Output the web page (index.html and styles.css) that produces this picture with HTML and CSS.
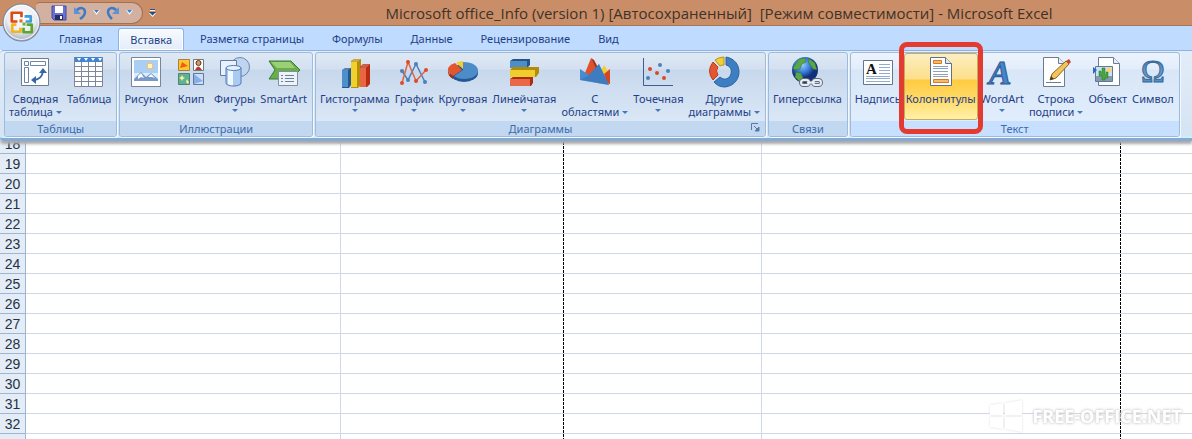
FILE: index.html
```html
<!DOCTYPE html>
<html lang="ru">
<head>
<meta charset="utf-8">
<title>Microsoft Excel</title>
<link rel="stylesheet" href="styles.css">
</head>
<body>
<div class="app">
<header class="titlebar">
  <button class="office" aria-label="Office">
    <svg viewBox="0 0 38 38"><defs><radialGradient id="orb" cx=".5" cy=".35" r=".65"><stop offset="0" stop-color="#fff"/><stop offset=".6" stop-color="#e9edf3"/><stop offset="1" stop-color="#9fabc0"/></radialGradient></defs><circle cx="19" cy="19" r="18" fill="url(#orb)" stroke="#7c8596"/><circle cx="19" cy="19" r="16.5" fill="none" stroke="#fff" opacity=".8"/>
    <g fill="none" stroke-width="2.600" stroke-linejoin="round"><path d="M15 18H9.500V9.500H19V14" stroke="#dc4a16"/><path d="M22 13h6v5h-5" stroke="#3d9be0"/><path d="M14 21h-4v7h8V24" stroke="#f3b51c"/><path d="M21 24v4.500h8V21h-5" stroke="#5fa52c"/></g><path d="M17 16h3v3h-3z" fill="#e96b20"/><path d="M20 19h3v3h-3z" fill="#6fb13a"/></svg>
  </button>
  <div class="quick">
    <button class="qbtn" aria-label="Сохранить"><svg width="16" height="16"><path d="M1 1h14v14H3l-2-2z" fill="#6a72d0" stroke="#4448a6"/><path d="M4 1h8v7H4z" fill="#fff"/><path d="M4 10h8v5H4z" fill="#252e66"/><path d="M9 11h2v3H9z" fill="#fff"/></svg></button>
    <button class="qbtn" aria-label="Отменить"><svg width="14" height="16"><path d="M3 6c4-5 9-3 9 1 0 3-2 5-5 7" fill="none" stroke="#3f78c4" stroke-width="2.500"/><path d="M1 2v7h7z" fill="#5b93d8"/></svg></button>
    <button class="qbtn" aria-label="Список отмены"><svg width="7" height="5"><path d="M0 0h7L3.500 5z" fill="#f3f7ff"/><path d="M1 0h5L3.500 3z" fill="#477bc0"/></svg></button>
    <button class="qbtn" aria-label="Вернуть"><svg width="14" height="16"><path d="M11 6C7 1 2 3 2 7c0 3 2 5 4 7" fill="none" stroke="#3f78c4" stroke-width="2.500"/><path d="M13 2v7H6z" fill="#5b93d8"/></svg></button>
    <button class="qbtn" aria-label="Список возврата"><svg width="7" height="5"><path d="M0 0h7L3.500 5z" fill="#f3f7ff"/><path d="M1 0h5L3.500 3z" fill="#477bc0"/></svg></button>
  </div>
  <button class="qbtn" aria-label="Настройка панели"><svg width="7" height="8"><path d="M1 .5h5" stroke="#304b78"/><path d="M1 1.500h5" stroke="#fff"/><path d="M0 4h7L3.500 8z" fill="#fff"/><path d="M0 3h7L3.500 6.500z" fill="#304b78"/></svg></button>
  <h1 class="title">Microsoft office_Info (version 1) [Автосохраненный]&nbsp; [Режим совместимости] - Microsoft Excel</h1>
</header>
<nav class="tabs">
  <button class="tab">Главная</button><button class="tab active">Вставка</button><button class="tab">Разметка страницы</button><button class="tab">Формулы</button><button class="tab">Данные</button><button class="tab">Рецензирование</button><button class="tab">Вид</button>
</nav>
<main class="ribbon">
  <section class="group">
    <div class="tools">
      <button class="tool"><svg viewBox="0 0 32 32"><path d="M2.500 2.500h27v27h-27z" fill="#fff" stroke="#707b8d"/><g fill="#fff" stroke="#6f84a4"><path d="M5.500 5.500h4v4h-4zM11.500 5.500h15v4h-15zM5.500 11.500h4v15h-4z"/></g><path d="M14 24q9 0 10-9" fill="none" stroke="#3565a5" stroke-width="2"/><path d="M20 17l4-5 4 5zM17 20l-5 4 5 4z" fill="#3565a5"/></svg><span>Сводная</span><span>таблица<i class="arrow"></i></span></button>
      <button class="tool"><svg viewBox="0 0 32 32"><path d="M2 2h28v29H2z" fill="#fff"/><path d="M2 1h28v5H2z" fill="#4284d2"/><path d="M4 2h4L6 5zM11 2h4l-2 3zM18 2h4l-2 3zM25 2h4l-2 3z" fill="#fff"/><path d="M1.500 1v29.500h28V1M8.500 6v24M15.500 6v24M22.500 6v24M2 10.500h28M2 15.500h28M2 20.500h28M2 25.500h28" stroke="#7c879c" fill="none"/></svg><span>Таблица</span></button>
    </div><h2>Таблицы</h2>
  </section>
  <section class="group">
    <div class="tools">
      <button class="tool"><svg viewBox="0 0 32 32"><path d="M1.500 1.500h29v29h-29z" fill="#fff" stroke="#7a8597"/><path d="M4 4h24v21H4z" fill="#a9d0f4"/><path d="M4 17h24v8H4z" fill="#dcecf9"/><circle cx="20" cy="10" r="3" fill="#fff4c2" stroke="#f7b85b"/><path d="M4 23l7-7 5 5 5-4 7 6v2H4z" fill="#779bc9"/><path d="M8 20l3-3 3 5-3-1-3 2zM18 21l3-3 4 4-3-1z" fill="#fff"/></svg><span>Рисунок</span></button>
      <button class="tool"><svg viewBox="0 0 32 32"><path d="M3.500 3.500h11v11h-11z" fill="#ffc72d" stroke="#a78134"/><path d="M5 12l2-6 6 4z" fill="#ef5c19"/><path d="M18.500 3.500h10v11h-10z" fill="#fff" stroke="#777"/><circle cx="23.500" cy="7" r="2.500" fill="#d99b62" stroke="#593525"/><path d="M20 14q3-7 7 0z" fill="#b83c25"/><path d="M3.500 17.500h11v11h-11z" fill="#5eb294" stroke="#57806e"/><path d="M7 19l1 2 2 1-2 1-1 2-1-2-2-1 2-1zM12 23l1 2 1 1-1 2-2-2z" fill="#fff09a"/><path d="M18.500 17.500h10v11h-10z" fill="#cbdffa" stroke="#61799c"/><path d="M19 18l9 7-9 3z" fill="#84afea"/></svg><span>Клип</span></button>
      <button class="tool"><svg viewBox="0 0 32 32"><circle cx="21" cy="11" r="9.500" fill="#bfd5ef" stroke="#6988b1"/><path d="M1.500 4.500h16v15h-16z" fill="#e9f2fc" stroke="#617da5"/><path d="M7 12v15c0 4 15 4 15 0V12z" fill="#a9cbf2" stroke="#557ab1"/><path d="M9 13v15q3 2 5 1V13z" fill="#eff7ff"/><ellipse cx="14.500" cy="12" rx="7.500" ry="2.500" fill="#e6f1ff" stroke="#557ab1"/></svg><span>Фигуры</span><i class="arrow"></i></button>
      <button class="tool"><svg viewBox="0 0 32 32"><path d="M1 5h22l9 9-9 9H1l6-9z" fill="#68ae4b" stroke="#397b34"/><path d="M3 6h19l5 6H9z" fill="#9dcf76"/><path d="M10.500 15.500h19v14h-19z" fill="#edf3f8" stroke="#8290a0"/><path d="M13 19.500h2M17 19.500h9M13 22.500h2M17 22.500h9M13 25.500h2M17 25.500h9" stroke="#6682a1"/></svg><span>SmartArt</span></button>
    </div><h2>Иллюстрации</h2>
  </section>
  <section class="group">
    <div class="tools">
      <button class="tool"><svg viewBox="0 0 32 32"><path d="M3 14l3-2h6v17l-2 3H3z" fill="#23588f"/><path d="M3 14h6v17H3z" fill="#4d8fcb"/><path d="M12 5l3-2h7v26l-3 3h-7z" fill="#b68e08"/><path d="M12 6h6v25h-6z" fill="#f0cf2e"/><path d="M21 11l3-3h7v20l-3 3h-7z" fill="#b92c13"/><path d="M21 12h6v19h-6z" fill="#e96643"/><path d="M3 14l3-2h6l-3 2zM12 6l3-3h7l-4 3zM21 12l3-4h7l-4 4z" fill="#fff" opacity=".25"/></svg><span>Гистограмма</span><i class="arrow"></i></button>
      <button class="tool"><svg viewBox="0 0 32 32"><g fill="#4b80b9"><path d="M4 15l6 9 8-16 9 18" fill="none" stroke="#4b80b9" stroke-width="1.500"/><circle cx="4" cy="15" r="2"/><circle cx="10" cy="24" r="2"/><circle cx="18" cy="8" r="2"/><circle cx="27" cy="26" r="2"/></g><g fill="#db4b29"><path d="M4 27l6-21 8 19 10-11" fill="none" stroke="#db6547" stroke-width="1.500"/><circle cx="4" cy="27" r="2"/><circle cx="10" cy="6" r="2"/><circle cx="18" cy="25" r="2"/><circle cx="28" cy="14" r="2"/></g></svg><span>График</span><i class="arrow"></i></button>
      <button class="tool"><svg viewBox="0 0 32 32"><ellipse cx="17" cy="17" rx="14" ry="9" fill="#245894"/><path d="M16 14V6c20 0 20 17 1 17q-6 0-10-3z" fill="#4d8cc8"/><path d="M15 14l-9 6q-11-8 2-13z" fill="#e4552c"/><path d="M1 13q0 5 5 7v3q-6-3-5-10z" fill="#a92b12"/><path d="M9 7q3-2 7-2v8z" fill="#f4ce2e"/></svg><span>Круговая</span><i class="arrow"></i></button>
      <button class="tool"><svg viewBox="0 0 32 32"><path d="M2 5l3-2h17v6l-3 3H2z" fill="#235588"/><path d="M2 5h17v7H2z" fill="#4d8ec8"/><path d="M2 14l3-3h26v6l-3 4H2z" fill="#b18b0a"/><path d="M2 14h25v7H2z" fill="#efcd2c"/><path d="M2 23l3-2h20v6l-2 3H2z" fill="#aa2c12"/><path d="M2 23h20v7H2z" fill="#e96848"/></svg><span>Линейчатая</span><i class="arrow"></i></button>
      <button class="tool"><svg viewBox="0 0 32 32"><path d="M4 22L12 2l11 20z" fill="#df512c"/><path d="M12 2l3 2 8 15-2 2z" fill="#ab2f18"/><path d="M20 19l5-10 6 9v10H20z" fill="#f4cd32"/><path d="M25 18l6-5v15l-3-1z" fill="#d64624"/><path d="M1 13l9 6 10-11 10 21-29-5z" fill="#4a8bd0"/><path d="M1 24l9-5 10-11 10 21z" fill="#2c66aa" opacity=".4"/></svg><span>С</span><span>областями<i class="arrow"></i></span></button>
      <button class="tool"><svg viewBox="0 0 32 32"><path d="M1.500 2v27.500H31" fill="none" stroke="#3e5f8d"/><g fill="#d84b29"><circle cx="8" cy="13" r="2"/><circle cx="15" cy="17" r="2"/><circle cx="22" cy="22" r="2"/></g><g fill="#4c80bb"><circle cx="18" cy="9" r="2"/><circle cx="6" cy="22" r="2"/><circle cx="26" cy="15" r="2"/></g></svg><span>Точечная</span><i class="arrow"></i></button>
      <button class="tool"><svg viewBox="0 0 32 32"><path d="M18 1c18 3 17 28-1 30q-7 0-11-5l6-5c9 8 17-9 6-12z" fill="#3d7fc2" stroke="#2c659f"/><path d="M5 24q-7-9 0-18l5 5q-3 4 0 8z" fill="#e45630" stroke="#ba3b1d"/><path d="M7 4q4-3 9-3v8q-3 0-4 1z" fill="#f3cf36" stroke="#b89016"/></svg><span>Другие</span><span>диаграммы<i class="arrow"></i></span></button>
    </div><h2>Диаграммы<button class="launcher" aria-label="Параметры диаграммы"><svg width="9" height="9"><path d="M.5 7V.5H7" fill="none" stroke="#5878a8"/><path d="M3 3l4 4M8 4v4H4z" stroke="#5878a8" fill="#5878a8"/></svg></button></h2>
  </section>
  <section class="group">
    <div class="tools">
      <button class="tool"><svg viewBox="0 0 32 32"><defs><radialGradient id="globe" cx=".4" cy=".3"><stop stop-color="#9bd0ff"/><stop offset=".6" stop-color="#3478d6"/><stop offset="1" stop-color="#122f79"/></radialGradient></defs><circle cx="14" cy="14" r="13" fill="url(#globe)"/><path d="M8 3l6-1 1 4-4 2-2 5-5 1-2-2zM17 2l7 5 2 7-4-1-4-6zM5 16l5 1 2 5-3 4-5-5z" fill="#5aa747" stroke="#2f6e42" stroke-width=".5"/><g fill="none" stroke="#5f6b7a" stroke-width="4"><rect x="10" y="24" width="8" height="5" rx="2.500"/><rect x="22" y="24" width="8" height="5" rx="2.500"/></g><g fill="none" stroke="#e7edf3" stroke-width="2"><rect x="10" y="24" width="8" height="5" rx="2.500"/><rect x="22" y="24" width="8" height="5" rx="2.500"/><path d="M16 26.500h8"/></g></svg><span>Гиперссылка</span></button>
    </div><h2>Связи</h2>
  </section>
  <section class="group text-group">
    <div class="tools">
      <button class="tool"><svg viewBox="0 0 32 32"><path d="M1.500 4.500h29v24h-29z" fill="#fff" stroke="#65758c"/><path d="M17 8.500h11M17 11.500h11M17 14.500h11M17 17.500h11M4 20.500h24M4 22.500h24M4 25.500h24" stroke="#8fadcf"/><text x="4" y="18" class="letter">A</text></svg><span>Надпись</span></button>
      <button class="tool selected"><svg viewBox="0 0 32 32"><path d="M5.500 1.500h15l6 6v22h-21z" fill="#fff" stroke="#607087"/><path d="M20.500 1.500v6h6" fill="#dce7f4" stroke="#607087"/><path d="M8.500 4.500h8v3h-8zM8.500 23.500h15v3h-15z" fill="#f6ba6c" stroke="#d97920"/><path d="M8 10.500h15M8 12.500h15M8 15.500h15M8 18.500h15M8 20.500h15" stroke="#8ca1bd"/></svg><span>Колонтитулы</span></button>
      <button class="tool"><svg viewBox="0 0 32 32"><text x="14" y="28" class="wordart">A</text></svg><span>WordArt</span><i class="arrow"></i></button>
      <button class="tool"><svg viewBox="0 0 32 32"><path d="M3.500 1.500h15l6 6v23h-21z" fill="#fff" stroke="#6d7d91"/><path d="M18.500 1.500v6h6" fill="#e6eff9" stroke="#6d7d91"/><path d="M6 26.500h15" stroke="#6080a8"/><path d="M10 24l2-6L26 5l3 3-13 14z" fill="#f3c45d" stroke="#8f6524"/><path d="M10 24l1-4 3 3z" fill="#4a382d"/><path d="M26 5l3-2 2 3-2 2z" fill="#c54934"/></svg><span>Строка</span><span>подписи<i class="arrow"></i></span></button>
      <button class="tool"><svg viewBox="0 0 32 32"><path d="M6.500 1.500h15l6 6v22h-21z" fill="#fff" stroke="#687c97"/><path d="M21.500 1.500v6h6" fill="#e5edf7" stroke="#687c97"/><path d="M3.500 10.500h17v15h-17z" fill="#c9e1f3" stroke="#607898"/><path d="M4 20h16v5H4z" fill="#849bad"/><circle cx="17" cy="14" r="2.500" fill="#ffd36b"/><path d="M10 24v-4H7v-5h2v2h1v-5h3v7h1v-3h2v6h-3v2z" fill="#45a643" stroke="#24712a" stroke-width=".5"/><path d="M1 11l4 3-4 4z" fill="#2e69bb"/></svg><span>Объект</span></button>
      <button class="tool"><svg viewBox="0 0 32 32"><defs><linearGradient id="omega" y2="1" x2="0"><stop stop-color="#356da9"/><stop offset=".65" stop-color="#6ea4d4"/><stop offset="1" stop-color="#1768b9"/></linearGradient></defs><text x="16" y="26" class="omega" fill="url(#omega)">Ω</text></svg><span>Символ</span></button>
    </div><h2>Текст</h2>
  </section>
</main>
<div class="sheet">
<table>
<colgroup><col class="c-head"><col class="c-a"><col class="c-b"><col class="c-c"><col class="c-d"><col></colgroup>
<tbody>
<tr><th>18</th><td></td><td class="brk"></td><td></td><td class="brk"></td><td></td></tr>
<tr><th>19</th><td></td><td class="brk"></td><td></td><td class="brk"></td><td></td></tr>
<tr><th>20</th><td></td><td class="brk"></td><td></td><td class="brk"></td><td></td></tr>
<tr><th>21</th><td></td><td class="brk"></td><td></td><td class="brk"></td><td></td></tr>
<tr><th>22</th><td></td><td class="brk"></td><td></td><td class="brk"></td><td></td></tr>
<tr><th>23</th><td></td><td class="brk"></td><td></td><td class="brk"></td><td></td></tr>
<tr><th>24</th><td></td><td class="brk"></td><td></td><td class="brk"></td><td></td></tr>
<tr><th>25</th><td></td><td class="brk"></td><td></td><td class="brk"></td><td></td></tr>
<tr><th>26</th><td></td><td class="brk"></td><td></td><td class="brk"></td><td></td></tr>
<tr><th>27</th><td></td><td class="brk"></td><td></td><td class="brk"></td><td></td></tr>
<tr><th>28</th><td></td><td class="brk"></td><td></td><td class="brk"></td><td></td></tr>
<tr><th>29</th><td></td><td class="brk"></td><td></td><td class="brk"></td><td></td></tr>
<tr><th>30</th><td></td><td class="brk"></td><td></td><td class="brk"></td><td></td></tr>
<tr><th>31</th><td></td><td class="brk"></td><td></td><td class="brk"></td><td></td></tr>
<tr><th>32</th><td></td><td class="brk"></td><td></td><td class="brk"></td><td></td></tr>
<tr><th></th><td></td><td class="brk"></td><td></td><td class="brk"></td><td></td></tr>
</tbody>
</table>
<div class="watermark"><svg width="34" height="34" viewBox="0 0 34 34"><path d="M1 6l13-2v12H1zM16 4l17-3v15H16zM1 18h13v12L1 28zM16 18h17v15l-17-3z" fill="#fff"/></svg><span>FREE-OFFICE.NET</span></div>
</div>
</div>
</body>
</html>
```
FILE: styles.css
```css
* { box-sizing: border-box; }
body { margin: 0; font-family: "Noto Sans", "Open Sans", sans-serif; font-size: 11px; color: #1e3f87; }
button { border: 0; background: none; padding: 0; margin: 0; font: inherit; color: inherit; }
h1, h2 { margin: 0; font-weight: 400; }
svg { display: block; overflow: visible; }
.app { height: 100vh; overflow: hidden; display: flex; flex-direction: column; }

.titlebar { position: relative; flex: none; height: 26px; display: flex; align-items: center; padding-left: 36px; background: #c98e67; border-bottom: 1px solid #a87452; }
.office { position: absolute; left: 2px; top: 3px; z-index: 3; width: 39px; height: 39px; }
.quick { display: flex; align-items: center; gap: 6px; height: 22px; padding: 0 9px 0 15px; border: 1px solid #a56f51; border-left: 0; border-radius: 4px 12px 12px 0; background: #d3b1a1; }
.quick + .qbtn { margin-left: 6px; }
.title { flex: 1; padding-left: 90px; text-align: center; white-space: nowrap; font-family: "Open Sans", sans-serif; font-size: 15px; line-height: 24px; color: #40322a; }

.tabs { flex: none; height: 24px; display: flex; gap: 4px; padding: 2px 0 0 47px; background: #bfdbff; }
.tab { padding: 0 12px; line-height: 20px; white-space: nowrap; border-radius: 3px 3px 0 0; }
.tab.active { padding: 0 11px; border: 1px solid #8db2e3; border-bottom: 0; background: linear-gradient(#f8fbff, #e2ecf8); box-shadow: inset 0 0 0 1px #fff; }

.ribbon { position: relative; z-index: 2; flex: none; display: flex; align-items: flex-start; gap: 2px; height: 91px; padding: 1px 9px 0 4px; border-top: 1px solid #8db2e3; border-bottom: 3px solid #86a9d5; border-radius: 4px 0 0 4px; background: linear-gradient(#e3edf9, #d5e3f3 85px, #c7f5fd 86px); box-shadow: 0 3px 3px #a9a9a9; }
.group { flex: none; display: flex; flex-direction: column; height: 85px; border: 1px solid #9dbbdc; border-radius: 3px; box-shadow: 1px 1px 0 #f2f8ff; background: linear-gradient(#dfe9f5, #d3e0f0 16px, #c8d8ec 17px, #d9e7f6 67px); }
.tools { flex: 1; display: flex; align-items: stretch; gap: 1px; padding: 0 3px 0 2px; }
.tool { position: relative; min-width: 40px; height: 67px; padding: 2px 1px 1px; display: flex; flex-direction: column; align-items: center; line-height: 13px; white-space: nowrap; border: 1px solid transparent; border-radius: 3px; }
.tool svg { width: 32px; height: 32px; margin-bottom: 4px; }
.arrow { display: inline-block; border: 3px solid transparent; border-top-color: #4778ba; border-bottom: 0; margin: 4px 0 0; }
span > .arrow { margin: 0 0 2px 3px; }
.group h2 { position: relative; flex: none; height: 15px; line-height: 15px; font-size: 11px; text-align: center; color: #3e6aaa; background: #c1d8f0; border-radius: 0 0 3px 3px; }
.launcher { position: absolute; right: 5px; top: 2px; }
.text-group { background: linear-gradient(#ecf3fd, #e3edfa 16px, #d9e6f7 17px, #e0edfc 67px); }
.text-group h2 { background: #c8e0ff; }
.letter { font: bold 15px "Liberation Serif", serif; fill: #111; }
.wordart { font: italic bold 34px/1 "Liberation Serif", serif; text-anchor: middle; fill: #4683c9; stroke: #285892; }
.omega { font: 32px/1 "Liberation Serif", serif; text-anchor: middle; stroke: #386797; }
.selected { border-color: #c7aa5f; background: linear-gradient(#fbeec0, #fddf8c 25px, #ffcc3f 26px, #ffd968 45px, #fff2a8); }
.selected::after { content: ""; position: absolute; z-index: 4; inset: -12px -6px -15px; border: 5px solid #e33b30; border-radius: 8px; }

.sheet { position: relative; flex: 1; min-height: 0; background: #fff; }
.sheet table { width: 100%; margin-top: -7px; table-layout: fixed; border-spacing: 0; }
.c-head { width: 26px; }
.c-a { width: 315px; }
.c-b { width: 223px; }
.c-c { width: 198px; }
.c-d { width: 359px; }
th, td { height: 20px; padding: 0; border-bottom: 1px solid #d0d7e5; border-right: 1px solid #d0d7e5; }
th { padding-top: 1px; font: 14px/18px "Liberation Sans", sans-serif; color: #26333f; background: #e4ecf7; border-color: #9eb6ce; }
td:last-child { border-right: 0; }
td.brk { border-right: 0; background: repeating-linear-gradient(#000 0 3px, #fff 3px 4px) right top / 1px 100% no-repeat border-box; }
.watermark { position: absolute; right: 10px; bottom: 6px; display: flex; align-items: center; gap: 9px; font: bold 18px "Open Sans", sans-serif; color: #fff; text-shadow: 0 0 3px #ccc; filter: drop-shadow(0 0 1px #ddd); }
```
